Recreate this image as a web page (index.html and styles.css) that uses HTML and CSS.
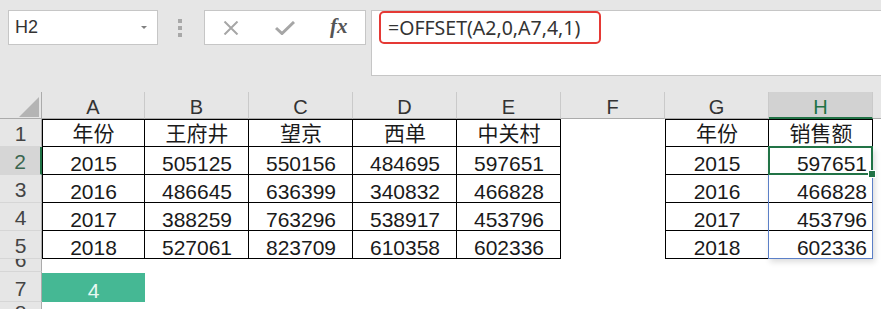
FILE: index.html
```html
<!DOCTYPE html>
<html lang="zh-CN">
<head>
  <meta charset="UTF-8">
  <title>OFFSET</title>
  <link rel="stylesheet" href="styles.css">
</head>
<body>

  <!-- 编辑栏 -->
  <div class="bar">
    <div class="namebox">
      <span>H2</span>
      <span class="caret"></span>
    </div>
    <div class="grip"><i></i><i></i><i></i></div>
    <div class="btns">
      <svg class="ico" width="16" height="14" viewBox="0 0 16 14">
        <path d="M1.5 0.5 L14.5 13.5 M14.5 0.5 L1.5 13.5" stroke="#a6a6a6" stroke-width="2" fill="none"/>
      </svg>
      <svg class="ico" width="20" height="14" viewBox="0 0 20 14">
        <path d="M1 7 L7 12.5 L19 1" stroke="#a6a6a6" stroke-width="3" fill="none"/>
      </svg>
      <span class="fx">fx</span>
    </div>
    <div class="formula">
      <div class="hl">=OFFSET(A2,0,A7,4,1)</div>
    </div>
  </div>

  <!-- 工作表 -->
  <div class="sheet">
    <div class="corner"></div>
    <div class="ch">A</div>
    <div class="ch">B</div>
    <div class="ch">C</div>
    <div class="ch">D</div>
    <div class="ch">E</div>
    <div class="ch">F</div>
    <div class="ch">G</div>
    <div class="ch sel">H</div>
    <div class="ch end"></div>

    <div class="rh">1</div>
    <div class="c t top left cjk">年份</div>
    <div class="c t top cjk">王府井</div>
    <div class="c t top cjk">望京</div>
    <div class="c t top cjk">西单</div>
    <div class="c t top cjk">中关村</div>
    <div class="c"></div>
    <div class="c t top left cjk">年份</div>
    <div class="c t top cjk">销售额</div>
    <div class="c"></div>

    <div class="rh sel">2</div>
    <div class="c t left">2015</div>
    <div class="c t">505125</div>
    <div class="c t">550156</div>
    <div class="c t">484695</div>
    <div class="c t">597651</div>
    <div class="c"></div>
    <div class="c t left">2015</div>
    <div class="c t num cur">
      597651
      <!-- 选区 -->
      <div class="range"></div>
      <div class="active"><span class="handle"></span></div>
    </div>
    <div class="c"></div>

    <div class="rh">3</div>
    <div class="c t left">2016</div>
    <div class="c t">486645</div>
    <div class="c t">636399</div>
    <div class="c t">340832</div>
    <div class="c t">466828</div>
    <div class="c"></div>
    <div class="c t left">2016</div>
    <div class="c t num">466828</div>
    <div class="c"></div>

    <div class="rh">4</div>
    <div class="c t left">2017</div>
    <div class="c t">388259</div>
    <div class="c t">763296</div>
    <div class="c t">538917</div>
    <div class="c t">453796</div>
    <div class="c"></div>
    <div class="c t left">2017</div>
    <div class="c t num">453796</div>
    <div class="c"></div>

    <div class="rh">5</div>
    <div class="c t left">2018</div>
    <div class="c t">527061</div>
    <div class="c t">823709</div>
    <div class="c t">610358</div>
    <div class="c t">602336</div>
    <div class="c"></div>
    <div class="c t left">2018</div>
    <div class="c t num">602336</div>
    <div class="c"></div>

    <div class="rh short"><span>6</span></div>
    <div class="c"></div><div class="c"></div><div class="c"></div><div class="c"></div>
    <div class="c"></div><div class="c"></div><div class="c"></div><div class="c"></div><div class="c"></div>

    <div class="rh">7</div>
    <div class="c green">4</div>
    <div class="c"></div><div class="c"></div><div class="c"></div>
    <div class="c"></div><div class="c"></div><div class="c"></div><div class="c"></div><div class="c"></div>

    <div class="rh cut">8</div>
    <div class="c"></div><div class="c"></div><div class="c"></div><div class="c"></div>
    <div class="c"></div><div class="c"></div><div class="c"></div><div class="c"></div><div class="c"></div>
  </div>

</body>
</html>
```

FILE: styles.css
```css
body {
  margin: 0;
  background: #fff;
  font-family: "Liberation Sans", "Noto Sans CJK SC", sans-serif;
  color: #222;
  overflow: hidden;
}

/* 编辑栏 */
.bar {
  height: 92px;
  background: #e6e6e6;
  display: flex;
  align-items: flex-start;
  padding-top: 10px;
  box-sizing: border-box;
}

.namebox {
  margin-left: 8px;
  width: 150px;
  height: 35px;
  box-sizing: border-box;
  background: #fff;
  border: 1px solid #c6c6c6;
  display: flex;
  align-items: center;
  justify-content: space-between;
  padding: 0 10px 0 6px;
  font-size: 18px;
  color: #333;
}

.caret {
  width: 0;
  height: 0;
  border-left: 3px solid transparent;
  border-right: 3px solid transparent;
  border-top: 3px solid #808080;
  margin-bottom: 1px;
}

.grip {
  margin-left: 20px;
  padding-top: 9px;
  display: flex;
  flex-direction: column;
  gap: 3px;
}

.grip i {
  display: block;
  width: 4px;
  height: 4px;
  background: #a8a8a8;
}

.btns {
  margin-left: 22px;
  width: 162px;
  height: 35px;
  box-sizing: border-box;
  background: #fff;
  border: 1px solid #c6c6c6;
  display: flex;
  align-items: center;
  padding-left: 18px;
}

.btns .ico + .ico {
  margin-left: 36px;
}

.fx {
  margin-left: 35px;
  font-family: "Liberation Serif", serif;
  font-style: italic;
  font-weight: bold;
  font-size: 21px;
  color: #555;
  margin-top: -3px;
}

.formula {
  flex: 1;
  margin-left: 5px;
  height: 66px;
  box-sizing: border-box;
  background: #fff;
  border: 1px solid #c6c6c6;
  border-right: none;
  padding-left: 7px;
}

.hl {
  width: 222px;
  height: 33px;
  box-sizing: border-box;
  border: 2px solid #e53935;
  border-radius: 5px;
  padding: 1px 0 0 7px;
  font-family: "Noto Sans", sans-serif;
  font-size: 19.5px;
  line-height: 28px;
  color: #333;
}

/* 工作表 */
.sheet {
  display: grid;
  grid-template-columns: 42px 103px repeat(7, 104px) 1fr;
  grid-template-rows: 27px repeat(5, 28px) 13px 30px 20px;
}

.corner {
  background: #e6e6e6;
  border-right: 1px solid #ababab;
  border-bottom: 1px solid #ababab;
  position: relative;
}

.corner::after {
  content: "";
  position: absolute;
  right: 2px;
  bottom: 1px;
  width: 0;
  height: 0;
  border-left: 20px solid transparent;
  border-bottom: 20px solid #b4b4b4;
}

.ch {
  background: #e6e6e6;
  border-right: 1px solid #cacaca;
  border-bottom: 1px solid #ababab;
  display: flex;
  justify-content: center;
  align-items: flex-end;
  font-size: 20px;
  line-height: 20px;
  color: #333;
  padding-bottom: 1px;
}

.ch.sel {
  background: #d2d2d2;
  color: #217346;
  border-bottom: 2px solid #217346;
  padding-bottom: 0;
}

.ch.end {
  border-right: none;
}

.rh {
  background: #e6e6e6;
  border-right: 1px solid #ababab;
  border-bottom: 1px solid #d6d6d6;
  display: flex;
  justify-content: center;
  align-items: flex-end;
  font-size: 21px;
  line-height: 20px;
  color: #444;
  padding-bottom: 2px;
  overflow: hidden;
}

.rh.sel {
  background: #d6d6d6;
  color: #3b6650;
  border-right: 2px solid #217346;
}

.rh.short {
  align-items: flex-start;
  padding-bottom: 0;
}

.rh.short span {
  margin-top: -9px;
}

.rh.cut {
  align-items: flex-start;
  padding: 1px 0 0;
  border-bottom: none;
}

.c {
  display: flex;
  justify-content: center;
  align-items: flex-end;
  font-size: 21px;
  line-height: 20px;
  padding-bottom: 1px;
  color: #1a1a1a;
  overflow: hidden;
  white-space: nowrap;
}

.c.cjk {
  padding-bottom: 3px;
}

.c.num {
  justify-content: flex-end;
  padding-right: 6px;
}

.c.t {
  box-shadow: inset -1px -1px 0 #000;
}

.c.t.top {
  box-shadow: inset -1px -1px 0 #000, inset 0 1px 0 #000;
}

.c.t.left {
  box-shadow: inset -1px -1px 0 #000, inset 1px 0 0 #000;
}

.c.t.top.left {
  box-shadow: inset -1px -1px 0 #000, inset 1px 1px 0 #000;
}

.c.green {
  background: #45b894;
  color: #e8f8f2;
  margin-top: 1px;
}

/* 选区 */
.c.cur {
  position: relative;
  overflow: visible;
  z-index: 1;
}

.range {
  position: absolute;
  left: -1px;
  top: 0;
  right: 0;
  height: 112px;
  border: 1px solid #5b7fc7;
  box-sizing: border-box;
  box-shadow: 2px 3px 6px rgba(0, 0, 0, 0.14);
  pointer-events: none;
}

.active {
  position: absolute;
  left: -1px;
  top: -1px;
  right: 0;
  bottom: 0;
  border: 2px solid #217346;
  pointer-events: none;
}

.handle {
  position: absolute;
  right: -5px;
  bottom: -5px;
  width: 6px;
  height: 6px;
  background: #217346;
  border: 1px solid #fff;
}
```
